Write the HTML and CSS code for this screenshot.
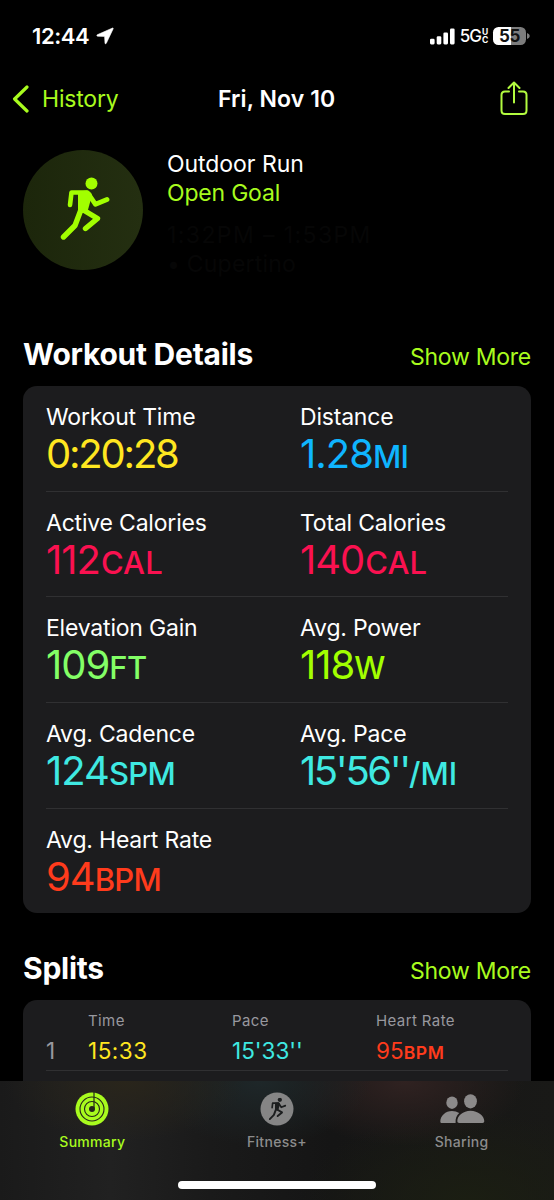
FILE: index.html
```html
<!DOCTYPE html>
<html lang="en">
<head>
<meta charset="utf-8">
<title>Outdoor Run</title>
<link rel="stylesheet" href="styles.css">
</head>
<body>
<svg class="defs" width="0" height="0" aria-hidden="true">
  <symbol id="runner" viewBox="0 0 50 64">
    <circle cx="31.500" cy="6.500" r="6" fill="currentColor"/>
    <path d="M18 14.500 L27 13.500 Q30.500 14 32 18 L28.500 31 L27 36 L18 36 Z" fill="currentColor"/>
    <g fill="none" stroke="currentColor" stroke-linecap="round" stroke-linejoin="round">
      <path d="M10 28 L11.500 15.500 L27 15.500" stroke-width="4.600"/>
      <path d="M28.500 17 L35.500 27.300 L47 22.500" stroke-width="4.800"/>
      <path d="M25 34 L37.500 41.500 L25.500 51.500" stroke-width="5.400"/>
      <path d="M25 19 L20.500 34 L15 48.500 L3.500 60" stroke-width="5.400"/>
    </g>
  </symbol>
</svg>
<div class="screen">
  <div class="status">
    <div class="clock"><span>12:44</span>
      <svg width="18" height="18" viewBox="0 0 18 18"><path d="M16.600 1 L1.200 7.800 Q.2 9 1.600 9.200 L8.600 9.400 L9 16.200 Q9.500 17.500 10.300 16.300 L17.200 1.700 Q17.300.8 16.600 1Z" fill="#fff" stroke="#fff" stroke-width=".6" stroke-linejoin="round"/></svg>
    </div>
    <div class="indicators">
      <svg class="bars" width="25" height="17" viewBox="0 0 25 17" fill="#fff"><rect x="0" y="10.800" width="4.600" height="5.600" rx="1.300"/><rect x="6.700" y="8.200" width="4.600" height="8.200" rx="1.300"/><rect x="13.400" y="4.500" width="4.600" height="11.900" rx="1.300"/><rect x="20" y=".4" width="4.600" height="16" rx="1.300"/></svg>
      <span class="net">5G</span><span class="uc"><span>U</span><span>C</span></span>
      <span class="battery">55</span><svg class="nub" width="3" height="6" viewBox="0 0 3 6"><path d="M0 0Q2.800 1 2.800 3T0 6Z" fill="#7c7c7c"/></svg>
    </div>
  </div>

  <header class="nav">
    <div class="back"><svg width="17" height="28" viewBox="0 0 17 28"><path d="M15 2 L2.600 14 L15 26" fill="none" stroke="#a8fb1e" stroke-width="3.200" stroke-linecap="round" stroke-linejoin="round"/></svg><span>History</span></div>
    <div class="title">Fri, Nov 10</div>
    <svg class="share" width="28" height="36" viewBox="0 0 28 36" fill="none" stroke="#b2fb3f" stroke-width="2" stroke-linecap="round" stroke-linejoin="round"><path d="M9 10.500H5Q1.500 10.500 1.500 14V29.500Q1.500 33 5 33H23Q26.500 33 26.500 29.500V14Q26.500 10.500 23 10.500H19M14 21.500V1.500M8.500 7L14 1.500L19.500 7"/></svg>
  </header>

  <section class="hero">
    <div class="badge"><svg width="50" height="64"><use href="#runner"/></svg></div>
    <div class="about">
      <div class="kind">Outdoor Run</div>
      <div class="goal">Open Goal</div>
      <div class="faint when">1:32PM – 1:53PM</div>
      <div class="faint">• Cupertino</div>
    </div>
  </section>

  <div class="head"><h2>Workout Details</h2><a class="more">Show More</a></div>
  <section class="card details">
    <div class="row"><div class="metric"><div class="label">Workout Time</div><div class="value time yellow">0:20:28</div></div><div class="metric"><div class="label">Distance</div><div class="value blue">1.28<small>MI</small></div></div></div>
    <div class="row"><div class="metric"><div class="label">Active Calories</div><div class="value pink">112<small class="cal">CAL</small></div></div><div class="metric"><div class="label">Total Calories</div><div class="value pink">140<small class="cal">CAL</small></div></div></div>
    <div class="row"><div class="metric"><div class="label">Elevation Gain</div><div class="value green">109<small>FT</small></div></div><div class="metric"><div class="label">Avg. Power</div><div class="value lime">118<small>W</small></div></div></div>
    <div class="row"><div class="metric"><div class="label">Avg. Cadence</div><div class="value cyan">124<small>SPM</small></div></div><div class="metric"><div class="label">Avg. Pace</div><div class="value pace cyan">15'56''<small>/MI</small></div></div></div>
    <div class="row"><div class="metric"><div class="label">Avg. Heart Rate</div><div class="value red">94<small>BPM</small></div></div></div>
  </section>

  <div class="head splits-head"><h2>Splits</h2><a class="more">Show More</a></div>
  <section class="card splits">
    <div class="cols names"><span></span><span>Time</span><span>Pace</span><span>Heart Rate</span></div>
    <div class="cols split"><span class="num">1</span><span class="duration yellow">15:33</span><span class="cyan">15'33''</span><span class="red">95<small>BPM</small></span></div>
  </section>

  <nav class="tabs">
    <div class="tab active">
      <svg width="34" height="34" viewBox="0 0 34 34"><circle cx="17" cy="17" r="16.500" fill="#a8fb1e"/><g fill="none" stroke="#24261a" stroke-width="1.100"><circle cx="17" cy="17" r="12"/><circle cx="17" cy="17" r="7.500"/></g><circle cx="17" cy="17" r="3" fill="#24261a"/><path d="M19 0V16" stroke="#24261a" stroke-width="1.200"/></svg>
      <span>Summary</span>
    </div>
    <div class="tab">
      <svg width="34" height="34" viewBox="0 0 34 34"><circle cx="17" cy="17" r="16.500" fill="#858585"/><svg x="8.500" y="5.500" width="18" height="23" color="#1c1e1f"><use href="#runner"/></svg></svg>
      <span>Fitness+</span>
    </div>
    <div class="tab">
      <svg width="46" height="34" viewBox="0 0 46 34" fill="#8c8a8a"><ellipse cx="13" cy="10.700" rx="5.700" ry="6.200"/><ellipse cx="31.500" cy="9.300" rx="6.400" ry="7.100"/><path d="M1.300 29.500C1.300 24 6.500 19 13 19Q17 19 20.200 21.100C17.500 23.500 16.300 26.500 16.600 31H2.500Q1.300 31 1.300 29.500ZM18.300 29.200C18.300 24 24 18.800 31.500 18.800S45.300 24 45.300 29.200Q45.300 31 43.500 31H20.100Q18.300 31 18.300 29.200Z"/></svg>
      <span>Sharing</span>
    </div>
    <div class="home"></div>
  </nav>
</div>
</body>
</html>
```
FILE: styles.css
```css
* { box-sizing: border-box; }
body { margin: 0; background: #000; }
.defs { position: absolute; }
.screen {
  position: relative;
  width: 554px;
  height: 1200px;
  overflow: hidden;
  background: #000;
  color: #fff;
  font-family: Inter, "Liberation Sans", sans-serif;
  font-size: 23px;
}
svg { display: block; flex: none; }
.status { height: 72px; padding: 0 26px 0 32px; display: flex; justify-content: space-between; align-items: center; }
.clock { display: flex; align-items: center; gap: 7px; font-size: 22px; font-weight: 600; letter-spacing: -0.4px; }
.clock span { line-height: 26px; }
.indicators { display: flex; align-items: center; }
.net { margin-left: 5px; font-size: 17px; font-weight: 500; letter-spacing: -1px; }
.uc { margin-left: 1px; width: 7px; display: flex; flex-direction: column; font-size: 8.500px; line-height: 8px; font-weight: 700; }
.battery { margin-left: 4px; width: 33px; height: 18px; border-radius: 5.500px; background: linear-gradient(90deg, #fff 55%, #7c7c7c 55%); color: #111; font-size: 17px; line-height: 18px; font-weight: 700; text-align: center; letter-spacing: -0.4px; }
.nub { margin-left: 1px; margin-right: -2px; }

.nav { height: 53px; padding: 0 26px 0 12px; display: grid; grid-template-columns: 206px 1fr auto; align-items: center; }
.back { display: flex; align-items: center; gap: 13px; color: #a8fb1e; letter-spacing: -0.2px; }
.title { font-weight: 600; letter-spacing: 0.1px; }

.hero { height: 211px; padding: 25px 23px 0; display: flex; gap: 24px; }
.badge { width: 120px; height: 120px; flex: none; border-radius: 50%; background: linear-gradient(90deg, #1c260b, #242f11); color: #a2ff00; display: flex; justify-content: center; align-items: center; padding: 0 0 2px 3px; }
.about { line-height: 29px; letter-spacing: -0.05px; }
.goal { color: #a8fb1e; letter-spacing: -0.2px; }
.faint { color: #060606; letter-spacing: 0.2px; }
.when { margin-top: 13px; letter-spacing: 1.400px; }

.head { height: 50px; padding: 0 23px; display: flex; justify-content: space-between; align-items: baseline; }
h2 { margin: 0; font-size: 30px; line-height: 36px; font-weight: 700; letter-spacing: -0.25px; }
.more { color: #a8fb1e; letter-spacing: -0.25px; }
.card { margin: 0 23px; background: #1c1c1e; border-radius: 14px; padding: 0 23px; }
.details { height: 527px; }
.row { height: 105.700px; display: grid; grid-template-columns: 254px 1fr; border-bottom: 1px solid #303032; }
.row:last-child { border: 0; }
.label { margin-top: 17px; line-height: 28px; letter-spacing: -0.2px; }
.value { line-height: 46px; font-size: 40px; letter-spacing: -1px; white-space: nowrap; }
.value small { font-size: 31px; font-weight: 500; letter-spacing: -0.7px; }
.value .cal { margin-left: 1px; letter-spacing: 0.1px; }
.time { letter-spacing: -2.200px; }
.pace { letter-spacing: -2.400px; }
.pace small { letter-spacing: 0.1px; }
.yellow { color: #ffe620; }
.blue { color: #0fb5ff; }
.pink { color: #fa1150; }
.green { color: #83ff66; }
.lime { color: #a2ff00; }
.cyan { color: #3fe9e2; }
.red { color: #ff3b1c; }

.splits-head { margin-top: 37px; }
.splits { height: 180px; }
.cols { display: grid; grid-template-columns: 42px 144px 144px 1fr; }
.names { padding-top: 12px; font-size: 15px; line-height: 18px; letter-spacing: 0.4px; color: #98989f; }
.split { height: 41px; border-bottom: 1px solid #303032; font-size: 22.500px; line-height: 42px; }
.split small { font-size: 17.500px; font-weight: 600; letter-spacing: 0.6px; }
.duration { letter-spacing: 0.5px; }
.num { color: #98989f; }

.tabs {
  position: absolute;
  left: 0;
  right: 0;
  bottom: 0;
  height: 119px;
  padding: 11px 0 0;
  display: grid;
  grid-template-columns: repeat(3, 184.670px);
  align-content: start;
  background:
    radial-gradient(ellipse 120px 60px at 125px 0, #29251b, transparent),
    radial-gradient(ellipse 110px 65px at 260px 0, #1e2729, transparent),
    radial-gradient(ellipse 120px 65px at 405px 0, #302221, transparent),
    radial-gradient(ellipse 170px 90px at 470px 120px, #1b1e12, transparent),
    linear-gradient(90deg, #1a1a1a, #212121 20%, #1a1a1a 38%, #151515 60%, #191917);
  color: #8c8c8c;
  font-size: 14px;
  font-weight: 500;
  letter-spacing: .3px;
}
.tab { display: flex; flex-direction: column; align-items: center; gap: 7px; line-height: 17px; }
.active { color: #a8fb1e; }
.home { position: absolute; left: 178px; bottom: 11px; width: 198px; height: 8px; border-radius: 4px; background: #fff; }
```
